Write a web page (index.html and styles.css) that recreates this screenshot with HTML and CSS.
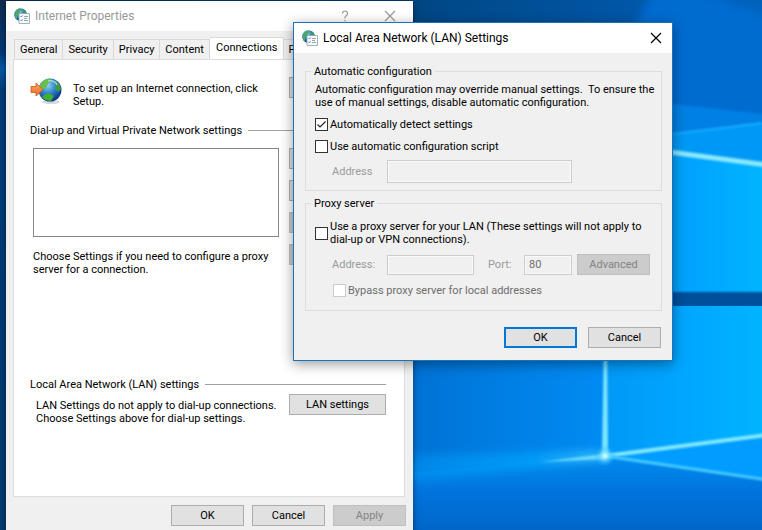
FILE: index.html
```html
<!DOCTYPE html>
<html lang="en">
<head>
  <meta charset="UTF-8">
  <title>Internet Properties</title>
  <link rel="stylesheet" href="styles.css">
</head>
<body>
  <svg class="wallpaper" viewBox="0 0 762 530" preserveAspectRatio="none" aria-hidden="true">
    <defs>
      <linearGradient id="sky" x1="0" y1="0" x2="1" y2="0">
        <stop offset="0" stop-color="#003566"/>
        <stop offset="0.54" stop-color="#004683"/>
        <stop offset="0.85" stop-color="#0058aa"/>
        <stop offset="1" stop-color="#0062bd"/>
      </linearGradient>
      <linearGradient id="pane" x1="0" y1="0" x2="1" y2="0">
        <stop offset="0" stop-color="#0098f6"/>
        <stop offset="0.5" stop-color="#00a6ff"/>
        <stop offset="1" stop-color="#00b4ff"/>
      </linearGradient>
      <linearGradient id="leftPane" x1="0" y1="0" x2="1" y2="0">
        <stop offset="0" stop-color="#0070d2"/>
        <stop offset="1" stop-color="#008cf4"/>
      </linearGradient>
      <linearGradient id="floor" x1="0" y1="0" x2="0" y2="1">
        <stop offset="0" stop-color="#008cf0"/>
        <stop offset="0.5" stop-color="#0074dc"/>
        <stop offset="1" stop-color="#0066c8"/>
      </linearGradient>
      <linearGradient id="beam" x1="0" y1="0" x2="1" y2="0">
        <stop offset="0" stop-color="#0094f4" stop-opacity="0.7"/>
        <stop offset="0.7" stop-color="#04a8ff"/>
        <stop offset="1" stop-color="#4fd0ff"/>
      </linearGradient>
      <linearGradient id="edge" x1="0" y1="0" x2="0" y2="1">
        <stop offset="0" stop-color="#0d2c4e"/>
        <stop offset="0.1" stop-color="#00397a"/>
        <stop offset="0.13" stop-color="#0058a8"/>
        <stop offset="0.17" stop-color="#003c7c"/>
        <stop offset="1" stop-color="#003a72"/>
      </linearGradient>
      <radialGradient id="spark">
        <stop offset="0" stop-color="#f2ffff"/>
        <stop offset="0.3" stop-color="#8deaff" stop-opacity="0.8"/>
        <stop offset="1" stop-color="#00a8ff" stop-opacity="0"/>
      </radialGradient>
      <filter id="soft" x="-20%" y="-20%" width="140%" height="140%"><feGaussianBlur stdDeviation="1"/></filter>
      <filter id="softer" x="-20%" y="-50%" width="140%" height="200%"><feGaussianBlur stdDeviation="5"/></filter>
    </defs>
    <rect width="762" height="530" fill="url(#sky)"/>
    <path d="M660 -24 800 28V150H620V60z" fill="#006cd0" filter="url(#softer)"/>
    <path d="M620 98 790 117V300H620z" fill="#0080e4" filter="url(#soft)"/>
    <path d="M640 139 762 123V300H640z" fill="#0098f6"/>
    <path d="M640 149 762 163V294H640z" fill="url(#pane)"/>
    <path d="M640 138 762 123" stroke="#18b0ff" stroke-width="2" filter="url(#soft)"/>
    <path d="M640 148 775 166" stroke="#8ce8ff" stroke-width="5" filter="url(#soft)"/>
    <rect x="400" y="292" width="390" height="14" fill="#00509a" filter="url(#soft)"/>
    <path d="M400 306H605V456L400 476z" fill="url(#leftPane)"/>
    <path d="M605 306H762V437L605 456z" fill="url(#pane)"/>
    <path d="M400 474 605 455 762 478V530H400z" fill="url(#floor)"/>
    <path d="M605 456 762 437V479z" fill="#009cff"/>
    <path d="M380 456 600 451 604 460 380 484z" fill="url(#beam)" opacity="0.7" filter="url(#softer)"/>
    <path d="M540 462 605 454V459z" fill="#6fdcff" filter="url(#soft)"/>
    <path d="M604 340H607L608 456H602z" fill="#7ce6ff" filter="url(#soft)"/>
    <path d="M605 456 775 434" stroke="#82e9ff" stroke-width="4" filter="url(#soft)"/>
    <path d="M605 456 775 481" stroke="#48cbff" stroke-width="3" filter="url(#soft)"/>
    <circle cx="605" cy="456" r="11" fill="url(#spark)"/>
    <rect width="10" height="530" fill="url(#edge)"/>
  </svg>

  <!-- Shared icons -->
  <svg class="defs" aria-hidden="true">
    <defs>
      <radialGradient id="globe" cx="0.4" cy="0.3" r="0.7">
        <stop offset="0" stop-color="#8fd4f6"/>
        <stop offset="0.5" stop-color="#2f82cc"/>
        <stop offset="1" stop-color="#0b3486"/>
      </radialGradient>
      <linearGradient id="arrow" x1="0" y1="0" x2="0" y2="1">
        <stop offset="0" stop-color="#ffa566"/>
        <stop offset="1" stop-color="#ef6a1c"/>
      </linearGradient>
      <symbol id="icon-options" viewBox="0 0 16 16">
        <circle cx="6.5" cy="6.5" r="6.3" fill="url(#globe)"/>
        <path d="M1 4Q3 .5 6 .6L7.500 2 5.500 4 6 6 3.500 8 2.500 12Q-.5 9 1 4z" fill="#4ca56a"/>
        <path d="M9 1Q12 2 12.600 5H10L8.500 3z" fill="#3c9659"/>
        <path d="M5 5.500H15.500V15.500H5z" fill="#f7fafc" stroke="#8ea1ad" stroke-width=".8"/>
        <path d="M6.500 8 7.300 9 8.600 7.300M6.500 12 7.300 13 8.600 11.300" fill="none" stroke="#3f82a5" stroke-width=".8"/>
        <path d="M10 8.500H14M10 10.500H13M10 12.500H14" stroke="#8a9aa5" stroke-width=".9"/>
      </symbol>
    </defs>
  </svg>

  <div class="window properties">
    <div class="titlebar inactive">
      <svg class="app-icon"><use href="#icon-options"/></svg>
      <span class="title">Internet Properties</span>
      <button class="caption" aria-label="Help"><svg viewBox="0 0 12 12"><path d="M3.500 3.500Q3.500 1 6 1T8.500 3.500Q8.500 5 7 6T6 8.500M6 10V11.300"/></svg></button>
      <button class="caption" aria-label="Close"><svg viewBox="0 0 12 12"><path d="M1 1 11 11M11 1 1 11"/></svg></button>
    </div>

    <div class="tabs" role="tablist">
      <button class="tab" role="tab">General</button>
      <button class="tab" role="tab">Security</button>
      <button class="tab" role="tab">Privacy</button>
      <button class="tab" role="tab">Content</button>
      <button class="tab active" role="tab" aria-selected="true">Connections</button>
      <button class="tab" role="tab">Programs</button>
    </div>

    <div class="panel" role="tabpanel">
      <div class="setup">
        <svg class="globe-icon" viewBox="0 0 32 28" aria-hidden="true">
          <ellipse cx="21" cy="25" rx="9" ry="2" fill="#d5d9df"/>
          <circle cx="20" cy="13" r="11.500" fill="url(#globe)"/>
          <path d="M10 8Q13 2 20 1.600L22 4 18 6 17 10 13 12 10 15Q8 12 10 8z" fill="#69bd4a"/>
          <path d="M24 3Q30 6 31 12L28 15 25 12 26 8z" fill="#3c9d40"/>
          <path d="M14 18 19 16 24 19 21 24Q15 24 12 20z" fill="#3fae32"/>
          <path d="M18 4Q25 3 27 8" fill="none" stroke="#d9f3ff" stroke-width="1.500" opacity=".6"/>
          <path d="M1 9.500H6V6L13 12.500 6 19V15.500H1z" fill="url(#arrow)" stroke="#c9561b" stroke-width=".8"/>
        </svg>
        <p>To set up an Internet connection, click Setup.</p>
        <button class="btn" aria-label="Setup"></button>
      </div>

      <h2 class="section">Dial-up and Virtual Private Network settings</h2>
      <div class="dialup">
        <select class="connections" size="5" aria-label="Connections"></select>
        <div class="actions">
          <button class="btn" aria-label="Add"></button>
          <button class="btn" aria-label="Add VPN"></button>
          <button class="btn" aria-label="Remove" disabled></button>
          <button class="btn" aria-label="Settings" disabled></button>
        </div>
        <p>Choose Settings if you need to configure a proxy server for a connection.</p>
      </div>

      <h2 class="section lan">Local Area Network (LAN) settings</h2>
      <div class="lan-row">
        <p>LAN Settings do not apply to dial-up connections. Choose Settings above for dial-up settings.</p>
        <button class="btn">LAN settings</button>
      </div>
    </div>

    <div class="footer">
      <button class="btn">OK</button>
      <button class="btn">Cancel</button>
      <button class="btn" disabled>Apply</button>
    </div>
  </div>

  <div class="window lan-settings">
    <div class="titlebar">
      <svg class="app-icon"><use href="#icon-options"/></svg>
      <span class="title">Local Area Network (LAN) Settings</span>
      <button class="caption" aria-label="Close"><svg viewBox="0 0 12 12"><path d="M1 1 11 11M11 1 1 11"/></svg></button>
    </div>

    <form class="lan-form">
      <fieldset>
        <legend>Automatic configuration</legend>
        <div class="rows">
          <p>Automatic configuration may override manual settings.&nbsp; To ensure the use of manual settings, disable automatic configuration.</p>
          <label class="check"><input type="checkbox" checked>Automatically detect settings</label>
          <label class="check"><input type="checkbox">Use automatic configuration script</label>
          <div class="field">
            <label class="name" for="script">Address</label>
            <input class="script" type="text" id="script" disabled>
          </div>
        </div>
      </fieldset>

      <fieldset class="proxy">
        <legend>Proxy server</legend>
        <div class="rows">
          <label class="check"><input type="checkbox">Use a proxy server for your LAN (These settings will not apply to dial-up or VPN connections).</label>
          <div class="field">
            <label class="name" for="address">Address:</label>
            <input class="address" type="text" id="address" disabled>
            <label class="port-name" for="port">Port:</label>
            <input class="port" type="text" id="port" value="80" disabled>
            <button class="btn" type="button" disabled>Advanced</button>
          </div>
          <label class="check bypass"><input type="checkbox" disabled>Bypass proxy server for local addresses</label>
        </div>
      </fieldset>

      <div class="footer">
        <button class="btn default" type="button">OK</button>
        <button class="btn" type="button">Cancel</button>
      </div>
    </form>
  </div>
</body>
</html>
```

FILE: styles.css
```css
* {
  box-sizing: border-box;
}

body {
  margin: 0;
  height: 100vh;
  overflow: hidden;
  position: relative;
  font-family: Tahoma, Roboto, "Noto Sans", sans-serif;
  font-size: 11px;
  line-height: 13px;
  color: #000;
}

p, h2 {
  margin: 0;
}

button, input, select {
  font: inherit;
  color: inherit;
}

.wallpaper {
  position: absolute;
  width: 100%;
  height: 100%;
}

.defs {
  position: absolute;
  width: 0;
  height: 0;
}

/* Windows */
.window {
  position: absolute;
  background: #f0f0f0;
}

.properties {
  left: 6px;
  top: 1px;
  width: 407px;
  box-shadow: 0 0 6px rgba(0, 0, 0, 0.5);
}

.lan-settings {
  left: 293px;
  top: 22px;
  width: 380px;
  border: 1px solid #1873bd;
  box-shadow: 0 3px 12px rgba(0, 0, 0, 0.4);
}

.titlebar {
  display: flex;
  align-items: center;
  height: 30px;
  padding: 0 8px;
  background: #fff;
  font-family: "Segoe UI", Roboto, sans-serif;
  font-size: 12px;
}

.title {
  flex: 1;
  margin-left: 5px;
}

.inactive {
  color: #999;
}

.app-icon {
  width: 16px;
  height: 16px;
}

.caption {
  width: 16px;
  height: 16px;
  padding: 2px;
  border: 0;
  background: none;
}

.inactive .caption {
  margin: 0 7px 0 22px;
}

.caption svg {
  display: block;
  width: 12px;
  height: 12px;
  fill: none;
  stroke: currentColor;
  stroke-width: 1.2;
}

/* Tabs */
.tabs {
  display: flex;
  align-items: flex-end;
  height: 28px;
  padding: 0 8px;
  overflow: hidden;
}

.tab {
  height: 20px;
  padding: 0 5px;
  border: 1px solid #d9d9d9;
  border-width: 1px 1px 0 0;
  background: #f0f0f0;
}

.tab:first-child {
  border-left-width: 1px;
}

.tab.active {
  height: 22px;
  padding: 0 6px 2px;
  background: #fff;
}

.tab:last-child {
  padding: 0 4px;
}

.panel {
  margin: 0 8px 0 7px;
  padding: 17px 18px 71px 16px;
  border: 1px solid #dcdcdc;
  background: #fff;
}

.btn {
  width: 73px;
  height: 21px;
  padding: 0;
  border: 1px solid #adadad;
  background: #e1e1e1;
}

.btn.default {
  border: 2px solid #0078d7;
}

.btn:disabled {
  border-color: #bfbfbf;
  background: #ccc;
  color: #838383;
}

.panel .btn {
  width: 97px;
}

.setup {
  display: grid;
  grid-template-columns: 32px 1fr 97px;
  column-gap: 11px;
}

.setup p {
  padding: 5px 10px 0 0;
}

.globe-icon {
  width: 32px;
  height: 28px;
}

.section {
  display: flex;
  align-items: center;
  gap: 6px;
  margin-top: 16px;
  font-size: 11px;
  font-weight: normal;
}

.section::after {
  content: "";
  flex: 1;
  border-top: 1px solid #a0a0a0;
}

.dialup {
  display: grid;
  grid-template-columns: 1fr 97px;
  grid-template-rows: 89px auto;
  gap: 13px 10px;
  margin-top: 11px;
  padding-left: 3px;
}

.connections {
  width: 100%;
  height: 100%;
  border: 1px solid #828790;
  border-radius: 0;
  background: #fff;
}

.actions {
  display: flex;
  flex-direction: column;
  gap: 11px;
  grid-column: 2;
  grid-row: 1 / 3;
}

.section.lan {
  margin-top: 102px;
}

.lan-row {
  display: grid;
  grid-template-columns: 1fr 97px;
  column-gap: 10px;
  padding: 3px 0 0 6px;
}

.lan-row p {
  padding-top: 5px;
}

.footer {
  display: flex;
  justify-content: flex-end;
  gap: 8px;
  padding: 8px 7px 11px;
}

/* LAN settings dialog */
.lan-form {
  padding: 12px 10px 0 11px;
}

fieldset {
  min-width: 0;
  margin: 0 0 6px;
  padding: 5px 2px 8px 9px;
  border: 1px solid #dcdcdc;
}

fieldset.proxy {
  padding: 10px 9px 13px;
}

legend {
  margin-left: -4px;
  padding: 0 3px;
}

.rows {
  display: flex;
  flex-direction: column;
  gap: 8px;
}

.check {
  display: flex;
  align-items: center;
  gap: 2px;
  min-height: 14px;
}

.check input {
  flex: none;
  appearance: none;
  width: 13px;
  height: 13px;
  margin: 0;
  border: 1px solid #333;
  background: #fff;
}

.check input:checked {
  background: #fff url("data:image/svg+xml,%3Csvg xmlns='http://www.w3.org/2000/svg' viewBox='0 0 11 11'%3E%3Cpath d='M1.500 5.500 4 8 9.500 2.500' fill='none' stroke='%23222' stroke-width='1.200'/%3E%3C/svg%3E");
}

.check input:disabled {
  border-color: #ccc;
}

.bypass {
  margin-left: 18px;
  color: #6d6d6d;
}

.field {
  display: flex;
  align-items: center;
  height: 21px;
  padding-left: 17px;
  color: #9a9a9a;
}

.name {
  width: 55px;
}

.field input {
  height: 20px;
  padding: 0 4px;
  border: 1px solid #ccc;
  box-shadow: inset 0 0 0 1px #fafafa;
  background: #f0f0f0;
  color: #6d6d6d;
}

.field .script {
  width: 185px;
  height: 23px;
}

.address {
  width: 87px;
}

.port-name {
  width: 50px;
  padding-left: 14px;
}

.port {
  width: 48px;
}

.field .btn {
  margin-left: 5px;
}

.lan-form .footer {
  gap: 11px;
  padding: 10px 1px 12px;
}
```
